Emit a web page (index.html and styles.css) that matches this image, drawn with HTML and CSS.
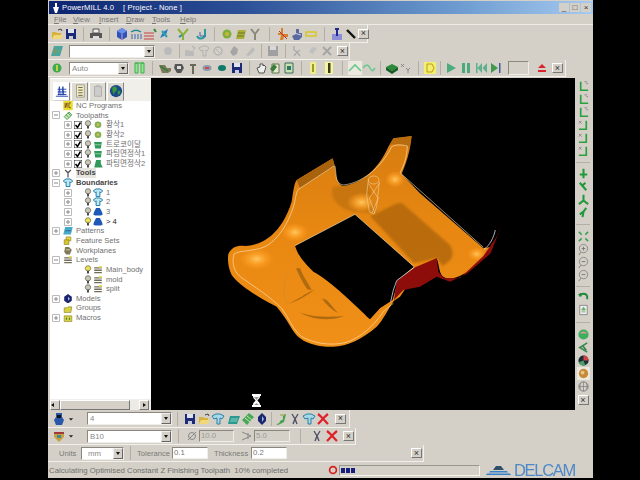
FILE: index.html
```html
<!DOCTYPE html>
<html lang="en">
<head>
<meta charset="utf-8">
<title>PowerMILL 4.0</title>
<link rel="stylesheet" href="styles.css">
</head>
<body>
<svg class="defs" aria-hidden="true">
  <symbol id="open" viewBox="0 0 14 14"><path d="M2 5h4l1 1h4v6H2z" fill="#d9b23c"/><path d="M4 8h9l-2 4H2z" fill="#f0d878"/><path d="M8 3l3-1 1 2" fill="none" stroke="#444"/></symbol>
  <symbol id="save" viewBox="0 0 14 14"><path d="M2 2h10v10H2z" fill="#1c2a78"/><path d="M4 2h6v4H4z" fill="#dfe3ee"/><path d="M5 9h4v3H5z" fill="#c8ccd8"/></symbol>
  <symbol id="print" viewBox="0 0 14 14"><path d="M4 2h6v4H4z" fill="#eee" stroke="#555"/><path d="M1 6h12v5H1z" fill="#555"/><path d="M4 9h6v3H4z" fill="#ddd"/></symbol>
  <symbol id="cube" viewBox="0 0 14 14"><path d="M7 1l5 3v6l-5 3-5-3V4z" fill="#2c52c0"/><path d="M7 7l5-3-5-3-5 3z" fill="#6b8fe8"/><path d="M7 7v6" stroke="#e8a0a0"/></symbol>
  <symbol id="arcs" viewBox="0 0 14 14"><path d="M2 5c3-2 7-2 10 0" fill="none" stroke="#2a8a9a" stroke-width="1.500"/><path d="M3 7v5M6 7v5M9 7v5M12 7v5" stroke="#3a66b0"/></symbol>
  <symbol id="redlines" viewBox="0 0 14 14"><path d="M1 6h10M1 9h10M1 12h10" stroke="#c84040"/><path d="M11 2l2 3" stroke="#2a8a3a" stroke-width="2"/></symbol>
  <symbol id="bluestar" viewBox="0 0 14 14"><path d="M3 11l3-6 5-3-2 6z" fill="#2a7ac8"/><path d="M5 4l5 6" stroke="#30a0a0" stroke-width="2"/></symbol>
  <symbol id="tealy" viewBox="0 0 14 14"><path d="M2 2l5 6 5-6M7 8v5" fill="none" stroke="#8ab23a" stroke-width="2"/><path d="M3 10l3-2" stroke="#2a8a9a" stroke-width="2"/></symbol>
  <symbol id="hook" viewBox="0 0 14 14"><path d="M2 9c2 4 7 3 8-1V2" fill="none" stroke="#2a9a9a" stroke-width="2"/><path d="M5 5v4h6" fill="none" stroke="#3a66b0"/></symbol>
  <symbol id="greenball" viewBox="0 0 14 14"><circle cx="7" cy="7" r="4.500" fill="#7fae3a"/><circle cx="7" cy="7" r="2" fill="#c8b840"/></symbol>
  <symbol id="olive" viewBox="0 0 14 14"><path d="M4 3h8l-2 9H2z" fill="#a8b03a"/><path d="M4 6h7M3 9h7" stroke="#6a7420"/></symbol>
  <symbol id="ytool" viewBox="0 0 14 14"><path d="M3 2l4 5 4-5M7 7v6" fill="none" stroke="#8a8a78" stroke-width="2"/></symbol>
  <symbol id="splat" viewBox="0 0 14 14"><path d="M5 1h2v6h5v3H8l-1 3H4l1-5H2V6h3z" fill="#d88030"/><path d="M3 4l8 8" stroke="#b03030"/></symbol>
  <symbol id="bsplat" viewBox="0 0 14 14"><path d="M6 2h3v4h3v4l-3 3H4L2 9l4-2z" fill="#5a6aa0"/><path d="M4 6l7 2" stroke="#d0d0e0"/></symbol>
  <symbol id="ybox" viewBox="0 0 14 14"><path d="M2 5h10v4H2z" fill="none" stroke="#d8c820" stroke-width="1.500"/></symbol>
  <symbol id="btool" viewBox="0 0 14 14"><path d="M2 7h10v6H2z" fill="#8c8fd8"/><path d="M5 1h4v2H8v6H6V3H5z" fill="#1c2a98"/></symbol>
  <symbol id="pen" viewBox="0 0 14 14"><path d="M3 3l8 8" stroke="#111" stroke-width="2.400"/></symbol>
  <symbol id="map" viewBox="0 0 14 14"><path d="M4 2h9l-3 10H1z" fill="#4aa4a0"/><path d="M3 7h8M6 3l-2 8" stroke="#8a9a50"/></symbol>
  <symbol id="gball" viewBox="0 0 14 14"><circle cx="7" cy="7" r="4" fill="#bbb"/></symbol>
  <symbol id="gfold" viewBox="0 0 14 14"><path d="M2 6h4l1 1h4v5H2z" fill="#bbb"/><path d="M9 2l3 2-2 2" fill="none" stroke="#aaa"/></symbol>
  <symbol id="gshirt" viewBox="0 0 14 14"><path d="M2 4l4-2h3l3 2-2 3-1-1v6H6V6L4 7z" fill="none" stroke="#b0b0b0"/></symbol>
  <symbol id="gdisc" viewBox="0 0 14 14"><circle cx="7" cy="7" r="4" fill="none" stroke="#b5b5b5" stroke-width="1.500"/><path d="M4 4l6 6" stroke="#b5b5b5"/></symbol>
  <symbol id="ghex" viewBox="0 0 14 14"><path d="M7 2l4 3-1 5-4 2-3-4z" fill="#a5a5a5"/></symbol>
  <symbol id="gsweep" viewBox="0 0 14 14"><path d="M3 11l7-8 2 3-6 6z" fill="#bbb"/></symbol>
  <symbol id="gsave" viewBox="0 0 14 14"><path d="M2 2h10v10H2z" fill="#a0a0a0"/><path d="M4 2h6v4H4z" fill="#d8d8d8"/></symbol>
  <symbol id="gx" viewBox="0 0 14 14"><path d="M4 2v4l3 2 3-2M4 12l3-4 3 4" fill="none" stroke="#ababab" stroke-width="1.400"/></symbol>
  <symbol id="gcheck" viewBox="0 0 14 14"><path d="M3 8l3-5 5 1-4 6z" fill="#c0c0c0"/></symbol>
  <symbol id="grx" viewBox="0 0 14 14"><path d="M3 3l8 8M11 3l-8 8" stroke="#a5a5a5" stroke-width="2"/></symbol>
  <symbol id="power" viewBox="0 0 14 14"><circle cx="7" cy="7" r="4.500" fill="#3caa50"/><path d="M7 4v6" stroke="#e0e040" stroke-width="1.600"/></symbol>
  <symbol id="gbars" viewBox="0 0 14 14"><path d="M3 2v10h3V2zM9 2v10h3V2zM3 2h9" fill="#8fe88f" stroke="#3cb04c"/></symbol>
  <symbol id="tray" viewBox="0 0 14 14"><path d="M1 4h6l2 3h4v3l-3 2H4z" fill="#7a7a5a"/><path d="M2 5l8 5" stroke="#2a7a3a" stroke-width="1.400"/></symbol>
  <symbol id="cup" viewBox="0 0 14 14"><path d="M3 3h7l2 4-3 5H5L2 7z" fill="#555"/><path d="M5 5h4v3H5z" fill="#ddd"/></symbol>
  <symbol id="tee" viewBox="0 0 14 14"><path d="M4 3h6v2H8v8H6V5H4z" fill="#6a6a5a"/></symbol>
  <symbol id="dish" viewBox="0 0 14 14"><ellipse cx="7" cy="7" rx="4.500" ry="3" fill="#8a9ab0"/><path d="M5 6h4v2H5z" fill="#d04a4a"/></symbol>
  <symbol id="teal" viewBox="0 0 14 14"><ellipse cx="7" cy="7" rx="4" ry="3" fill="#0f7a6a"/></symbol>
  <symbol id="hand" viewBox="0 0 14 14"><path d="M3 7l2 5h5l2-6-2-2-1 1V3L6 3v3z" fill="#eee" stroke="#555"/></symbol>
  <symbol id="docg" viewBox="0 0 14 14"><path d="M4 3h7v9H4z" fill="#e8e8d0" stroke="#5a7a4a"/><path d="M2 8l4-5 3 3-4 5z" fill="#3a7a3a"/></symbol>
  <symbol id="docb" viewBox="0 0 14 14"><path d="M3 2h8v10H3z" fill="#c8e0b0" stroke="#3a6a5a"/><path d="M5 5h4v4H5z" fill="#2a7a6a"/></symbol>
  <symbol id="ybar" viewBox="0 0 14 14"><path d="M4 1h6v12H4z" fill="#f0ee90"/><path d="M6 3h2v8H6z" fill="#9a9a30"/></symbol>
  <symbol id="ybar2" viewBox="0 0 14 14"><path d="M3 1h8v12H3z" fill="#f5f4a0"/><path d="M6 2h2.500v10H6z" fill="#3a3a18"/></symbol>
  <symbol id="wave" viewBox="0 0 14 14"><path d="M0 0h14v14H0z" fill="#ebe9e0"/><path d="M1 10l6-6 6 6" fill="none" stroke="#6cc88c" stroke-width="1.600"/></symbol>
  <symbol id="wave2" viewBox="0 0 14 14"><path d="M1 7c3-4 5-4 7 0s3 3 5 0" fill="none" stroke="#6cc88c" stroke-width="1.600"/></symbol>
  <symbol id="gcube" viewBox="0 0 14 14"><path d="M1 6l6-3 6 3-6 4z" fill="#2a8a3a"/><path d="M1 6v3l6 4 6-4V6l-6 4z" fill="#155a22"/></symbol>
  <symbol id="xyz" viewBox="0 0 14 14"><path d="M2 3l3 3M5 3L2 6M7 7l2 2 2-2M9 9v3" fill="none" stroke="#888"/></symbol>
  <symbol id="ygrid" viewBox="0 0 14 14"><path d="M1 1h12v12H1z" fill="#f2f06a"/><path d="M4 3h5l2 4-2 4H4M4 3v8" fill="none" stroke="#c09a20"/></symbol>
  <symbol id="play" viewBox="0 0 14 14"><path d="M3 2l9 5-9 5z" fill="#4cab7c"/></symbol>
  <symbol id="pause" viewBox="0 0 14 14"><path d="M3 2h3v10H3zM8 2h3v10H8z" fill="#4cab7c"/></symbol>
  <symbol id="rew" viewBox="0 0 14 14"><path d="M2 2h1.500v10H2zM8 2v10L3.500 7zM13 2v10L8.500 7z" fill="#5cb08c"/></symbol>
  <symbol id="next" viewBox="0 0 14 14"><path d="M3 2l7 5-7 5z" fill="#3f9a4c"/><path d="M11 2h1.500v10H11z" fill="#3b5f9a"/></symbol>
  <symbol id="eject" viewBox="0 0 14 14"><path d="M7 3l4 4H3z" fill="#d8242c"/><path d="M3 9h8v2H3z" fill="#d8242c"/></symbol>
  <symbol id="stool" viewBox="0 0 14 14"><path d="M4 1h6v4l2 3-2 5H4L2 8l2-3z" fill="#2a58a8"/><path d="M5 3h4v3H5z" fill="#111"/></symbol>
  <symbol id="down" viewBox="0 0 14 14"><path d="M4 6h6L7 9z" fill="#222"/></symbol>
  <symbol id="shirt" viewBox="0 0 14 14"><path d="M1 4l4-2h4l4 2-2 3-2-1v6H6V6L3 7z" fill="#a8d8e8" stroke="#2a80a8"/></symbol>
  <symbol id="teals" viewBox="0 0 14 14"><path d="M3 4h10l-3 8H1z" fill="#2a9a90"/><path d="M4 7h7M3 9h7" stroke="#8ad0c0"/></symbol>
  <symbol id="stack" viewBox="0 0 14 14"><path d="M1 8l7-7 5 4-7 8z" fill="#48a858"/><path d="M4 6l5 4M6 4l5 4" stroke="#c8e8b0"/></symbol>
  <symbol id="gem" viewBox="0 0 14 14"><path d="M7 1l4 4v4l-4 4-4-4V5z" fill="#1a2870"/><path d="M7 4l2 3-2 3z" fill="#a8b8e8"/></symbol>
  <symbol id="greens" viewBox="0 0 14 14"><path d="M2 12c5 0 3-4 6-4s-2-4 4-6l-2 8-6 3z" fill="#46a048"/><path d="M6 3h6" stroke="#90a040"/></symbol>
  <symbol id="scis" viewBox="0 0 14 14"><path d="M4 2l3 5 3-5M5 12l2-5 2 5" fill="none" stroke="#50506a" stroke-width="1.400"/></symbol>
  <symbol id="rx" viewBox="0 0 14 14"><path d="M2 2c3 2 7 7 10 10M12 2C9 4 5 9 2 12" stroke="#e02028" stroke-width="2.200" fill="none"/></symbol>
  <symbol id="pal" viewBox="0 0 14 14"><path d="M2 3h10v5l-5 5-5-5z" fill="#c8a040"/><path d="M2 3h10v2H2z" fill="#a03a3a"/><path d="M5 6h4v3H5z" fill="#3a8a9a"/></symbol>
  <symbol id="dia" viewBox="0 0 14 14"><circle cx="7" cy="7" r="3.500" fill="none" stroke="#888"/><path d="M3 11l8-8" stroke="#888"/></symbol>
  <symbol id="ang" viewBox="0 0 14 14"><path d="M2 3l9 4-9 4M8 4v6" fill="none" stroke="#888"/></symbol>
  <symbol id="stop" viewBox="0 0 14 14"><circle cx="7" cy="7" r="4" fill="none" stroke="#d82020" stroke-width="2"/></symbol>
  <symbol id="corner" viewBox="0 0 14 14"><path d="M4 2v9h8" fill="none" stroke="#2aa040" stroke-width="1.800"/><path d="M8 2h3M10 4h2" stroke="#888"/></symbol>
  <symbol id="corner2" viewBox="0 0 14 14"><path d="M10 2v9H2" fill="none" stroke="#2aa040" stroke-width="1.800"/><path d="M2 2l3 3M5 2L2 5" stroke="#888"/></symbol>
  <symbol id="cross" viewBox="0 0 14 14"><path d="M7 2v10M3 8h8" stroke="#1f9a3a" stroke-width="2.200"/></symbol>
  <symbol id="diag" viewBox="0 0 14 14"><path d="M3 3l7 8M9 3L6 6" stroke="#1f9a3a" stroke-width="2.200"/></symbol>
  <symbol id="tri" viewBox="0 0 14 14"><path d="M7 2v6L2 12M7 8l5 4" fill="none" stroke="#1f9a3a" stroke-width="2.200"/></symbol>
  <symbol id="zz" viewBox="0 0 14 14"><path d="M10 2L7 6l-1 6M3 9l4-3" fill="none" stroke="#1f9a3a" stroke-width="2.200"/></symbol>
  <symbol id="fit" viewBox="0 0 14 14"><path d="M2 2l3 3M12 2L9 5M2 12l3-3M12 12L9 9" stroke="#3aa050" stroke-width="1.600"/></symbol>
  <symbol id="zplus" viewBox="0 0 14 14"><circle cx="7" cy="6" r="4.500" fill="none" stroke="#888"/><path d="M7 4v4M5 6h4M4 10l-2 3" stroke="#777"/></symbol>
  <symbol id="zmin" viewBox="0 0 14 14"><circle cx="7" cy="6" r="4.500" fill="none" stroke="#888"/><path d="M5 6h4M4 10l-2 3" stroke="#777"/></symbol>
  <symbol id="undo" viewBox="0 0 14 14"><path d="M3 7c1-4 7-4 8 0v3" fill="none" stroke="#1f8a3a" stroke-width="2"/><path d="M1 5l3-2 1 4z" fill="#1f8a3a"/></symbol>
  <symbol id="page" viewBox="0 0 14 14"><path d="M3 2h8v10H3z" fill="#eee" stroke="#888"/><path d="M7 4l2 3H5zM5 9h4" fill="#6ab06a" stroke="#6ab06a"/></symbol>
  <symbol id="s-green" viewBox="0 0 14 14"><circle cx="7" cy="7" r="5.500" fill="#3cae5c"/><path d="M3 6c2-3 6-3 8 0z" fill="#d89a9a"/></symbol>
  <symbol id="s-net" viewBox="0 0 14 14"><path d="M11 2L3 7l8 5M6 5l4 5" fill="none" stroke="#3a8a50" stroke-width="1.800"/></symbol>
  <symbol id="s-mix" viewBox="0 0 14 14"><circle cx="7" cy="7" r="5.500" fill="#183038"/><path d="M7 7V1.500A5.500 5.500 0 0 1 12.500 7z" fill="#d84040"/><path d="M2 9a5.500 5.500 0 0 0 7 3.500L7 7z" fill="#4aa068"/></symbol>
  <symbol id="s-gold" viewBox="0 0 14 14"><path d="M0 0h14v14H0z" fill="#ebe8df"/><circle cx="7" cy="7" r="5" fill="#c8893a"/><circle cx="6" cy="6" r="2" fill="#e8c888"/></symbol>
  <symbol id="globe" viewBox="0 0 14 14"><circle cx="7" cy="7" r="5" fill="none" stroke="#777"/><path d="M2 7h10M7 2v10M4 3.500c-1 2-1 5 0 7M10 3.500c1 2 1 5 0 7" fill="none" stroke="#777" stroke-width=".7"/></symbol>
  <symbol id="tab1" viewBox="0 0 16 16"><path d="M1 14h14M3 12h10M3 9h10M3 6h10" stroke="#1c3fa8"/><path d="M4 13l1-10 1 10M8 13l1-10 1 10" fill="none" stroke="#1c3fa8"/></symbol>
  <symbol id="tab2" viewBox="0 0 16 16"><path d="M4 1h9v14H4z" fill="#f5eeb8" stroke="#999"/><path d="M6 4h5M6 7h5M6 10h5M6 13h5" stroke="#555"/></symbol>
  <symbol id="tab3" viewBox="0 0 16 16"><path d="M4 3h8v11H4z" fill="#ccc" stroke="#aaa"/><path d="M6 1h4v2H6z" fill="#bbb"/></symbol>
  <symbol id="tab4" viewBox="0 0 16 16"><circle cx="8" cy="8" r="7" fill="#1a4a8a"/><path d="M4 4c3-2 5-1 5 2S6 8 6 11 3 8 4 4zM10 8c2-1 3 0 3 1s-2 4-3 3z" fill="#3a9a3a"/></symbol>
  <symbol id="t-nc" viewBox="0 0 10 10"><path d="M0 0h10v10H0z" fill="#e8dc30"/><path d="M2 2v5l2-5v5M6 2h2M6 2v5h2" fill="none" stroke="#805020"/></symbol>
  <symbol id="t-tp" viewBox="0 0 10 10"><path d="M1 6l5-5 3 3-5 5z" fill="#d0e8b0" stroke="#4a9a5a"/><path d="M3 4l3 3M5 2l3 3" stroke="#4a9a5a"/></symbol>
  <symbol id="t-gb" viewBox="0 0 10 10"><circle cx="5" cy="5" r="3.500" fill="#80b050"/><circle cx="5" cy="5" r="1.500" fill="#c8c060"/></symbol>
  <symbol id="t-gs" viewBox="0 0 10 10"><path d="M1 2h8l-1 7H2z" fill="#2f9a5a"/><path d="M2 5h6" stroke="#9ad0a0"/></symbol>
  <symbol id="t-gm" viewBox="0 0 10 10"><path d="M3 1h5v4l2 4H1z" fill="#2f9a5a"/></symbol>
  <symbol id="t-tool" viewBox="0 0 10 10"><path d="M2 1l3 3 3-3M5 4v5" fill="none" stroke="#555" stroke-width="1.300"/></symbol>
  <symbol id="t-b" viewBox="0 0 10 10"><path d="M0 3l3-2h4l3 2-2 2-1-1v5H3V4L2 5z" fill="#c0e8f0" stroke="#1a78a8"/></symbol>
  <symbol id="t-bf" viewBox="0 0 10 10"><path d="M3 1h4l2 4 1 3-2 1H2L0 8l1-3z" fill="#1e58b8"/></symbol>
  <symbol id="t-pat" viewBox="0 0 10 10"><path d="M2 1h8L8 9H0z" fill="#4aa8c8"/><path d="M2 5h6" stroke="#2a6a88"/></symbol>
  <symbol id="t-fs" viewBox="0 0 10 10"><path d="M3 1h5v4H3z" fill="#e8d830" stroke="#807020" stroke-width=".6"/><path d="M1 4h5v5H1z" fill="#d8c828" stroke="#807020" stroke-width=".6"/></symbol>
  <symbol id="t-wp" viewBox="0 0 10 10"><path d="M2 1h4l3 3-2 5H3L1 6z" fill="#807a5a"/><path d="M3 4h4" stroke="#d8d0a0"/></symbol>
  <symbol id="t-lv" viewBox="0 0 10 10"><path d="M1 3h8M1 5.500h8M1 8h8" stroke="#706c58" stroke-width="1.400"/><path d="M6 1h3v2H6z" fill="#e8e050"/></symbol>
  <symbol id="t-mod" viewBox="0 0 10 10"><path d="M5 0l4 3v4l-4 3-4-3V3z" fill="#1a2470"/><path d="M5 3l2 2-2 2z" fill="#b0b8e0"/></symbol>
  <symbol id="t-grp" viewBox="0 0 10 10"><path d="M1 4h3l1-1h4l-1 6H1z" fill="#d8d040" stroke="#807a20" stroke-width=".6"/></symbol>
  <symbol id="t-mac" viewBox="0 0 10 10"><path d="M1 3h8v6H1z" fill="#d8d040" stroke="#807a20" stroke-width=".6"/><path d="M3 5h1v2H3zM6 5h1v2H6z" fill="#2a7a3a"/></symbol>
  <symbol id="bulb" viewBox="0 0 8 10"><circle cx="4" cy="3.500" r="2.800" fill="#c8c8b0" stroke="#666" stroke-width=".8"/><path d="M3 6h2v3H3z" fill="#444"/></symbol>
  <symbol id="bulby" viewBox="0 0 8 10"><circle cx="4" cy="3.500" r="2.800" fill="#e8e060" stroke="#807a30" stroke-width=".8"/><path d="M3 6h2v3H3z" fill="#444"/></symbol>
  <symbol id="chk" viewBox="0 0 8 8"><path d="M0 0h8v8H0z" fill="#fff" stroke="#222"/><path d="M1.500 4l2 2.500 3-5" fill="none" stroke="#000" stroke-width="1.500"/></symbol>
  <symbol id="plus" viewBox="0 0 8 8"><path d="M.5.500h7v7h-7z" fill="#fff" stroke="#bbb"/><path d="M2 4h4M4 2v4" stroke="#888"/></symbol>
  <symbol id="minus" viewBox="0 0 8 8"><path d="M.5.500h7v7h-7z" fill="#fff" stroke="#bbb"/><path d="M2 4h4" stroke="#888"/></symbol>
</svg>

<div class="app">
  <header class="title">
    <svg class="ti" viewBox="0 0 8 10"><path d="M3 0h2v4h2L5 10H3L1 4h2z" fill="#fff"/></svg>
    <span class="ttext">PowerMILL 4.0</span><span class="ttext tproj">[ Project - None ]</span>
    <div class="wbtns"><span class="wb">_</span><span class="wb">□</span><span class="wb">×</span></div>
  </header>
  <nav class="menu"><span class="m1"><u>F</u>ile</span><span class="m2"><u>V</u>iew</span><span class="m3"><u>I</u>nsert</span><span class="m4"><u>D</u>raw</span><span class="m5"><u>T</u>ools</span><span class="m6"><u>H</u>elp</span></nav>

  <div class="tb tb-a"><div class="bar w-319">
    <svg class="ic"><use href="#open"/></svg><svg class="ic"><use href="#save"/></svg><i class="d g11"></i><svg class="ic"><use href="#print"/></svg><i class="d g12"></i>
    <svg class="ic"><use href="#cube"/></svg><svg class="ic"><use href="#arcs"/></svg><svg class="ic"><use href="#redlines"/></svg><svg class="ic"><use href="#bluestar"/></svg><i class="g g5"></i><svg class="ic"><use href="#tealy"/></svg><i class="g g5"></i><svg class="ic"><use href="#hook"/></svg><i class="d g11"></i>
    <svg class="ic"><use href="#greenball"/></svg><svg class="ic"><use href="#olive"/></svg><svg class="ic"><use href="#ytool"/></svg><i class="d g14"></i>
    <svg class="ic"><use href="#splat"/></svg><svg class="ic"><use href="#bsplat"/></svg><svg class="ic"><use href="#ybox"/></svg><i class="d g12"></i>
    <svg class="ic"><use href="#btool"/></svg><svg class="ic"><use href="#pen"/></svg><button class="x">×</button>
  </div></div>

  <div class="tb"><div class="bar w-302">
    <svg class="ic"><use href="#map"/></svg><i class="g g5"></i><div class="combo w-86"><span></span><b></b></div><i class="g g6"></i><svg class="ic"><use href="#gball"/></svg><i class="d g8"></i>
    <svg class="ic"><use href="#gfold"/></svg><svg class="ic"><use href="#gshirt"/></svg><svg class="ic"><use href="#gdisc"/></svg><i class="g g2"></i><svg class="ic"><use href="#ghex"/></svg><i class="g g2"></i><svg class="ic"><use href="#gsweep"/></svg><i class="d g9"></i>
    <svg class="ic"><use href="#gsave"/></svg><i class="d g10"></i><svg class="ic"><use href="#gx"/></svg><i class="g g2"></i><svg class="ic"><use href="#gcheck"/></svg><svg class="ic"><use href="#grx"/></svg><i class="g g3"></i><button class="x">×</button>
  </div></div>

  <div class="tb"><div class="bar w-518">
    <svg class="ic"><use href="#power"/></svg><i class="g g5"></i><div class="combo w-60"><span class="muted">Auto</span><b></b></div><i class="g g3"></i><svg class="ic"><use href="#gbars"/></svg><i class="d g12"></i>
    <svg class="ic"><use href="#tray"/></svg><svg class="ic"><use href="#cup"/></svg><svg class="ic"><use href="#tee"/></svg><svg class="ic"><use href="#dish"/></svg><i class="g g1"></i><svg class="ic"><use href="#teal"/></svg><i class="g g1"></i><svg class="ic"><use href="#save"/></svg><i class="d g10"></i>
    <svg class="ic"><use href="#hand"/></svg><svg class="ic"><use href="#docg"/></svg><svg class="ic"><use href="#docb"/></svg><i class="d g10"></i>
    <svg class="ic"><use href="#ybar"/></svg><i class="g g2"></i><svg class="ic"><use href="#ybar2"/></svg><i class="d g12"></i>
    <svg class="ic"><use href="#wave"/></svg><svg class="ic"><use href="#wave2"/></svg><i class="d g9"></i>
    <svg class="ic"><use href="#gcube"/></svg><svg class="ic"><use href="#xyz"/></svg><i class="d g10"></i>
    <svg class="ic"><use href="#ygrid"/></svg><i class="d g7"></i>
    <svg class="ic"><use href="#play"/></svg><i class="g g1"></i><svg class="ic"><use href="#pause"/></svg><i class="g g1"></i><svg class="ic"><use href="#rew"/></svg><svg class="ic"><use href="#next"/></svg><i class="g g6"></i><div class="field w-21"></div><i class="g g6"></i><svg class="ic"><use href="#eject"/></svg><i class="g g3"></i><button class="x">×</button>
  </div></div>

  <main class="main">
    <aside class="tree">
      <div class="tabs">
        <span class="tab tab-on"><svg class="ti16"><use href="#tab1"/></svg></span>
        <span class="tab"><svg class="ti16"><use href="#tab2"/></svg></span>
        <span class="tab"><svg class="ti16"><use href="#tab3"/></svg></span>
        <span class="tab"><svg class="ti16"><use href="#tab4"/></svg></span>
      </div>
      <div class="rows">
        <div class="row top"><i class="e"></i><svg class="n"><use href="#t-nc"/></svg><span>NC Programs</span></div>
        <div class="row top"><svg class="e"><use href="#minus"/></svg><svg class="n"><use href="#t-tp"/></svg><span>Toolpaths</span></div>
        <div class="row sub"><svg class="e"><use href="#plus"/></svg><svg class="c"><use href="#chk"/></svg><svg class="b"><use href="#bulb"/></svg><svg class="n2"><use href="#t-gb"/></svg><span>황삭1</span></div>
        <div class="row sub"><svg class="e"><use href="#plus"/></svg><svg class="c"><use href="#chk"/></svg><svg class="b"><use href="#bulb"/></svg><svg class="n2"><use href="#t-gb"/></svg><span>황삭2</span></div>
        <div class="row sub"><svg class="e"><use href="#plus"/></svg><svg class="c"><use href="#chk"/></svg><svg class="b"><use href="#bulb"/></svg><svg class="n2"><use href="#t-gs"/></svg><span>트로코이달</span></div>
        <div class="row sub"><svg class="e"><use href="#plus"/></svg><svg class="c"><use href="#chk"/></svg><svg class="b"><use href="#bulb"/></svg><svg class="n2"><use href="#t-gs"/></svg><span>파팅면정삭1</span></div>
        <div class="row sub"><svg class="e"><use href="#plus"/></svg><svg class="c"><use href="#chk"/></svg><svg class="b"><use href="#bulb"/></svg><svg class="n2"><use href="#t-gm"/></svg><span>파팅면정삭2</span></div>
        <div class="row top strong"><svg class="e"><use href="#plus"/></svg><svg class="n"><use href="#t-tool"/></svg><span class="sel">Tools</span></div>
        <div class="row top strong"><svg class="e"><use href="#minus"/></svg><svg class="n"><use href="#t-b"/></svg><span>Boundaries</span></div>
        <div class="row sub"><svg class="e"><use href="#plus"/></svg><i class="c"></i><svg class="b"><use href="#bulb"/></svg><svg class="n2"><use href="#t-b"/></svg><span>1</span></div>
        <div class="row sub"><svg class="e"><use href="#plus"/></svg><i class="c"></i><svg class="b"><use href="#bulb"/></svg><svg class="n2"><use href="#t-b"/></svg><span>2</span></div>
        <div class="row sub"><svg class="e"><use href="#plus"/></svg><i class="c"></i><svg class="b"><use href="#bulb"/></svg><svg class="n2"><use href="#t-bf"/></svg><span>3</span></div>
        <div class="row sub"><svg class="e"><use href="#plus"/></svg><i class="c"></i><svg class="b"><use href="#bulby"/></svg><svg class="n2"><use href="#t-bf"/></svg><span class="act">&gt; 4</span></div>
        <div class="row top"><svg class="e"><use href="#plus"/></svg><svg class="n"><use href="#t-pat"/></svg><span>Patterns</span></div>
        <div class="row top"><i class="e"></i><svg class="n"><use href="#t-fs"/></svg><span>Feature Sets</span></div>
        <div class="row top"><i class="e"></i><svg class="n"><use href="#t-wp"/></svg><span>Workplanes</span></div>
        <div class="row top"><svg class="e"><use href="#minus"/></svg><svg class="n"><use href="#t-lv"/></svg><span>Levels</span></div>
        <div class="row sub"><i class="e"></i><i class="c"></i><svg class="b"><use href="#bulby"/></svg><svg class="n2"><use href="#t-lv"/></svg><span>Main_body</span></div>
        <div class="row sub"><i class="e"></i><i class="c"></i><svg class="b"><use href="#bulb"/></svg><svg class="n2"><use href="#t-lv"/></svg><span>mold</span></div>
        <div class="row sub"><i class="e"></i><i class="c"></i><svg class="b"><use href="#bulb"/></svg><svg class="n2"><use href="#t-lv"/></svg><span>split</span></div>
        <div class="row top"><svg class="e"><use href="#plus"/></svg><svg class="n"><use href="#t-mod"/></svg><span>Models</span></div>
        <div class="row top"><i class="e"></i><svg class="n"><use href="#t-grp"/></svg><span>Groups</span></div>
        <div class="row top"><svg class="e"><use href="#plus"/></svg><svg class="n"><use href="#t-mac"/></svg><span>Macros</span></div>
      </div>
      <div class="hscroll"><span class="sb sb-l"></span><span class="thumb"></span><span class="sb sb-r"></span></div>
    </aside>

    <section class="view">
      <svg class="model" viewBox="0 0 870 660">
        <defs>
          <linearGradient id="body" x1="0" y1="0" x2="0" y2="1"><stop offset="0" stop-color="#d67c10"/><stop offset=".45" stop-color="#e88812"/><stop offset="1" stop-color="#f09018"/></linearGradient>
          <radialGradient id="hl"><stop offset="0" stop-color="#ffc860"/><stop offset=".5" stop-color="#ffa52c" stop-opacity=".7"/><stop offset="1" stop-color="#ff9a20" stop-opacity="0"/></radialGradient>
          <clipPath id="bodyclip"><path clip-rule="evenodd" d="M25 372C35 350 55 345 75 348C130 345 185 310 215 215C220 185 222 160 230 150L338 85L345 110C348 140 350 160 368 168C410 165 470 130 505 50L520 25L575 18C572 50 565 85 545 132L600 190L790 355L815 350C800 375 770 410 735 430C710 445 685 450 672 442C655 430 660 410 650 385L600 410L540 500L522 512C505 535 490 570 470 590C430 625 380 650 340 650C300 652 260 640 240 625C215 605 205 570 170 530C130 510 60 470 35 435C25 415 22 390 25 372ZM225 347L405 253L582 410L535 450L518 510L480 535L450 568C410 530 330 450 280 425C255 400 235 380 225 347Z"/></clipPath>
        </defs>
        <path fill="url(#body)" fill-rule="evenodd" d="M25 372C35 350 55 345 75 348C130 345 185 310 215 215C220 185 222 160 230 150L338 85L345 110C348 140 350 160 368 168C410 165 470 130 505 50L520 25L575 18C572 50 565 85 545 132L600 190L790 355L815 350C800 375 770 410 735 430C710 445 685 450 672 442C655 430 660 410 650 385L600 410L540 500L522 512C505 535 490 570 470 590C430 625 380 650 340 650C300 652 260 640 240 625C215 605 205 570 170 530C130 510 60 470 35 435C25 415 22 390 25 372ZM225 347L405 253L582 410L535 450L518 510L480 535L450 568C410 530 330 450 280 425C255 400 235 380 225 347Z"/>
        <g clip-path="url(#bodyclip)">
          <path fill="#a9620c" d="M230 150L338 85L345 108L240 175Z"/>
          <path fill="#b86c0e" d="M510 45L520 25L575 18L568 55C550 40 530 40 510 45Z"/>
          <path class="soft" fill="#bd700e" opacity=".7" d="M340 170C360 170 400 160 440 130L470 250L400 245C370 240 340 220 335 190Z"/>
          <path class="soft" fill="#b56a0e" opacity=".9" d="M450 258C490 245 510 222 545 218L690 345C702 365 700 385 685 395L668 408L650 385L582 400Z"/>
          <ellipse cx="110" cy="387" rx="52" ry="32" fill="url(#hl)"/>
          <ellipse cx="225" cy="307" rx="40" ry="28" fill="url(#hl)"/>
          <ellipse cx="425" cy="217" rx="45" ry="30" fill="url(#hl)"/>
          <ellipse cx="525" cy="148" rx="30" ry="25" fill="url(#hl)"/>
          <ellipse cx="770" cy="372" rx="28" ry="20" fill="url(#hl)"/>
          <path class="soft1" fill="#b06a10" d="M205 522C230 515 265 495 285 478C265 488 235 505 205 522ZM228 415L240 415C250 440 265 460 275 480L262 478C250 460 238 440 228 415ZM232 545C280 570 330 575 372 558C340 560 280 565 232 545ZM305 505L320 510C335 525 345 540 355 550C335 540 320 525 305 505Z"/>
        </g>
        <path fill="none" stroke="#c98a30" stroke-width="2" d="M200 440C185 470 190 510 205 522"/>
        <path fill="#8c0d0a" d="M530 452L585 412L650 385L655 425L672 445L720 445L790 378L830 320L845 285L812 370L740 432L690 455L650 440L600 470L550 480L522 510Z"/>
        <path fill="none" stroke="#ffe8c0" stroke-width="1.800" d="M42 372C60 360 100 365 135 350C175 330 205 280 222 225C228 195 230 185 235 178L342 108M345 108C350 140 345 160 370 165C420 160 480 120 515 50C530 42 550 45 562 48C560 80 555 100 540 128L790 352M225 347L405 253L582 410M42 372C35 400 40 430 75 450C110 475 150 500 185 535C205 560 215 595 245 620C280 640 330 648 375 638C420 625 460 590 490 545L520 520"/>
        <path fill="none" stroke="#dfeefc" stroke-width="2.200" d="M582 412L530 452L520 480L512 515M792 358C810 345 820 325 826 300"/>
        <g fill="none" stroke="#f4dcb0" stroke-width="1.600"><ellipse cx="461" cy="150" rx="16" ry="12"/><path d="M445 150L440 195L448 245L462 252L470 230L478 155M445 160L475 205L455 250M478 160L448 205L465 250"/></g>
      </svg>
      <svg class="hourglass" viewBox="0 0 9 13"><path d="M0 0h9v2H8c0 3-2 3-2.500 4.500C6 8 8 8 8 11h1v2H0v-2h1c0-3 2-3 2.500-4.500C3 5 1 5 1 2H0z" fill="#fff"/><path d="M2 3h5L4.500 6zM2 11l2.500-2L7 11z" fill="#999"/></svg>
    </section>

    <aside class="rail">
      <svg class="ri"><use href="#corner"/></svg><svg class="ri"><use href="#corner"/></svg><svg class="ri"><use href="#corner"/></svg><svg class="ri"><use href="#corner2"/></svg><svg class="ri"><use href="#corner2"/></svg><svg class="ri"><use href="#corner2"/></svg>
      <i class="vd v9"></i>
      <svg class="ri"><use href="#cross"/></svg><svg class="ri"><use href="#diag"/></svg><svg class="ri"><use href="#tri"/></svg><svg class="ri"><use href="#zz"/></svg>
      <i class="vd v11"></i>
      <svg class="ri"><use href="#fit"/></svg><svg class="ri"><use href="#zplus"/></svg><svg class="ri"><use href="#zmin"/></svg><svg class="ri"><use href="#zmin"/></svg>
      <i class="vd v8"></i>
      <svg class="ri"><use href="#undo"/></svg><svg class="ri ri14"><use href="#page"/></svg>
      <i class="vd v11"></i>
      <svg class="ri"><use href="#s-green"/></svg><svg class="ri"><use href="#s-net"/></svg><svg class="ri"><use href="#s-mix"/></svg><svg class="ri"><use href="#s-gold"/></svg><svg class="ri"><use href="#globe"/></svg>
      <button class="x xr">×</button>
    </aside>
  </main>

  <div class="tb tb-a"><div class="bar w-302">
    <i class="g g2"></i><svg class="ic"><use href="#stool"/></svg><svg class="car"><use href="#down"/></svg><i class="g g11"></i><div class="combo w-85"><span class="muted">4</span><b></b></div><i class="d g11"></i>
    <svg class="ic"><use href="#save"/></svg><svg class="ic"><use href="#open"/></svg><svg class="ic"><use href="#shirt"/></svg><i class="g g2"></i><svg class="ic"><use href="#teals"/></svg><svg class="ic"><use href="#stack"/></svg><svg class="ic"><use href="#gem"/></svg><i class="d g5"></i>
    <svg class="ic"><use href="#greens"/></svg><svg class="ic"><use href="#scis"/></svg><svg class="ic"><use href="#shirt"/></svg><svg class="ic"><use href="#rx"/></svg><i class="g g5"></i><button class="x">×</button>
  </div></div>
  <div class="tb"><div class="bar w-308">
    <i class="g g2"></i><svg class="ic"><use href="#pal"/></svg><svg class="car"><use href="#down"/></svg><i class="g g11"></i><div class="combo w-85"><span class="muted">B10</span><b></b></div><i class="d g13"></i>
    <svg class="ic"><use href="#dia"/></svg><div class="field dis w-35">10.0</div><i class="g g6"></i><svg class="ic"><use href="#ang"/></svg><div class="field dis w-36">5.0</div><i class="d g20"></i>
    <svg class="ic"><use href="#scis"/></svg><i class="g g1"></i><svg class="ic"><use href="#rx"/></svg><i class="g g4"></i><button class="x">×</button>
  </div></div>
  <div class="tb"><div class="bar w-376">
    <i class="g g9"></i><span class="lbl w-l22">Units</span><div class="combo w-43 c-ind"><span class="muted">mm</span><b></b></div><i class="d g13"></i>
    <span class="lbl w-l35">Tolerance</span><div class="field w-36">0.1</div><i class="g g6"></i><span class="lbl w-l37">Thickness</span><div class="field w-36">0.2</div>
    <button class="x push">×</button>
  </div></div>

  <footer class="status">
    <span class="msg">Calculating Optimised Constant Z Finishing Toolpath&nbsp; 10% completed</span>
    <svg class="stop"><use href="#stop"/></svg>
    <div class="prog"><i></i><i></i><i></i></div>
    <svg class="logo" viewBox="0 0 27 14"><path d="M8 7l3-4h5l3 4z" fill="#30506a"/><path d="M5 8h17l1 1.500H4zM2 10.500h23l1 1.500H1z" fill="#3a80c8"/></svg>
    <span class="brand">DELCAM</span>
  </footer>
</div>
</body>
</html>
```

FILE: styles.css
```css
* { box-sizing: border-box; }
html, body { margin: 0; height: 100%; background: #000; overflow: hidden; }
body { padding-left: 48px; font-family: "Liberation Sans", Arial, sans-serif; }
.defs { display: none; }

.app { width: 545px; height: 478px; background: #d4d0c8; display: flex; flex-direction: column; filter: blur(.45px); color: #6c6c68; font-size: 7.6px; }

.title { height: 13px; flex: none; margin: 1px 0 0 1px; background: linear-gradient(90deg, #0d2470 0%, #2b4f96 35%, #6d9bd0 75%, #a6caf0 100%); display: flex; align-items: center; color: #fff; }
.ti { width: 8px; height: 10px; margin-left: 3px; }
.ttext { font-size: 7.6px; margin-left: 2px; letter-spacing: .1px; }
.tproj { margin-left: 9px; }
.wbtns { margin-left: auto; margin-right: 2px; display: flex; gap: 1px; }
.wb { width: 10px; height: 9px; background: #d4d0c8; color: #333; font-size: 8px; line-height: 9px; text-align: center; }

.menu { height: 11px; flex: none; display: flex; align-items: center; font-size: 7.8px; border-bottom: 1px solid #eeece6; }
.menu span { color: #777; }
.m1 { margin-left: 6px; width: 19px; }
.m2 { width: 26px; }
.m3 { width: 27px; }
.m4 { width: 26px; }
.m5 { width: 28px; }
.m6 { width: 22px; }

.tb { height: 17px; display: flex; flex: none; }
.tb-a { height: 18px; }
.bar { height: 100%; display: flex; align-items: center; padding-left: 2px; border-right: 1px solid #f2f0ea; border-bottom: 1px solid #f2f0ea; }
.w-319 { width: 320px; }
.w-302 { width: 302px; }
.w-308 { width: 308px; }
.w-518 { width: 518px; }
.w-376 { width: 376px; }

.ic { width: 14px; height: 14px; flex: none; }
.car { width: 10px; height: 14px; flex: none; }
.g, .d { display: block; height: 14px; flex: none; }
.d { background: linear-gradient(#b3afa6, #b3afa6) center / 1px 100% no-repeat; }
.g1 { width: 1px; }
.g2 { width: 2px; }
.g3 { width: 3px; }
.g4 { width: 4px; }
.g5 { width: 5px; }
.g6 { width: 6px; }
.g7 { width: 7px; }
.g8 { width: 8px; }
.g9 { width: 9px; }
.g10 { width: 10px; }
.g11 { width: 11px; }
.g12 { width: 12px; }
.g13 { width: 13px; }
.g14 { width: 14px; }
.g20 { width: 20px; }

.x { width: 11px; height: 10px; padding: 0; flex: none; background: #d4d0c8; border: 1px solid; border-color: #fff #777 #777 #fff; color: #333; font: 9px/7px "Liberation Sans", sans-serif; }
.push { margin-left: auto; margin-right: 1px; }

.combo { height: 13px; background: #fff; border: 1px solid; border-color: #8a877f #f0eee8 #f0eee8 #8a877f; display: flex; align-items: center; flex: none; }
.combo span { flex: 1; padding-left: 2px; font-size: 7.8px; line-height: 11px; }
.combo b { width: 10px; height: 11px; background: #d4d0c8; border: 1px solid; border-color: #eee #666 #666 #eee; position: relative; }
.combo b::after { content: ""; position: absolute; left: 2px; top: 3px; border: 2.5px solid transparent; border-top: 3px solid #111; border-bottom: 0; }
.muted { color: #888; }
.c-ind span { padding-left: 6px; }
.w-86 { width: 86px; }
.w-85 { width: 85px; }
.w-60 { width: 60px; }
.w-43 { width: 43px; }

.field { height: 12px; background: #fff; border: 1px solid; border-color: #8a877f #f0eee8 #f0eee8 #8a877f; font-size: 7.8px; line-height: 10px; padding-left: 1px; color: #777; flex: none; }
.dis { background: #d4d0c8; color: #9a9a94; }
.w-21 { width: 21px; background: #d4d0c8; height: 14px; }
.w-35 { width: 35px; }
.w-36 { width: 36px; }
.lbl { flex: none; font-size: 7.6px; color: #7a7a76; white-space: nowrap; }
.w-l22 { width: 22px; }
.w-l35 { width: 35px; }
.w-l37 { width: 37px; }

.main { flex: 1; min-height: 0; display: flex; margin-top: 1px; }
.tree { width: 103px; padding-left: 2px; display: flex; flex-direction: column; background: #d4d0c8; flex: none; }
.tabs { height: 23px; background: #f1efe9; display: flex; align-items: center; padding: 2px 0 0 3px; gap: 1px; flex: none; border-top: 1px solid #fff; }
.tab { width: 17px; height: 19px; border: 1px solid; border-color: #fff #888 #d4d0c8 #fff; display: flex; align-items: center; justify-content: center; background: #dedbd3; }
.tab-on { background: #fff; }
.ti16 { width: 14px; height: 16px; }
.rows { flex: 1; min-height: 0; background: #fff; overflow: hidden; }
.row { height: 9.65px; display: flex; align-items: center; font-size: 7.6px; line-height: 9.65px; white-space: nowrap; }
.row span { color: #707070; font-family: "Liberation Sans", "Noto Sans CJK KR", sans-serif; }
.top { padding-left: 2px; }
.sub { padding-left: 14px; }
.e { display: block; width: 8px; height: 8px; flex: none; }
.n { width: 10px; height: 9.5px; margin-left: 3px; flex: none; }
.n + span { margin-left: 3px; }
.c { display: block; width: 8px; height: 8px; margin-left: 2px; flex: none; }
.b { width: 8px; height: 9.5px; margin-left: 2px; flex: none; }
.n2 { width: 10px; height: 9.5px; margin-left: 1px; flex: none; }
.n2 + span { margin-left: 3px; }
.strong span { font-weight: 700; color: #444; }
.sel { background: #e6e4de; }
.act { color: #222 !important; }

.hscroll { height: 11px; display: flex; background: #ecebe6; border-top: 1px solid #eee; flex: none; }
.sb { width: 10px; height: 100%; background: #d4d0c8; border: 1px solid; border-color: #fff #777 #777 #fff; position: relative; flex: none; }
.sb-l::after, .sb-r::after { content: ""; position: absolute; top: 2px; border: 2.5px solid transparent; }
.sb-l::after { left: 0; border-right: 3px solid #111; border-left: 0; }
.sb-r::after { left: 3px; border-left: 3px solid #111; border-right: 0; }
.thumb { width: 70px; margin-right: 9px; background: #d4d0c8; border: 1px solid; border-color: #fff #777 #777 #fff; }

.view { flex: 1; min-width: 0; background: #000; position: relative; overflow: hidden; }
.model { position: absolute; left: 69px; top: 52px; width: 290px; height: 220px; }
.soft { filter: blur(3px); }
.soft1 { filter: blur(1px); }
.hourglass { position: absolute; left: 101px; top: 316px; width: 9px; height: 13px; }

.rail { width: 18px; padding: 2px 3px 0 1px; display: flex; flex-direction: column; align-items: center; flex: none; }
.ri { width: 13px; height: 13px; flex: none; }
.ri14 { height: 14px; }
.vd { display: block; width: 100%; flex: none; background: linear-gradient(#b3afa6, #b3afa6) center / 100% 1px no-repeat; }
.v8 { height: 8px; }
.v9 { height: 9px; }
.v11 { height: 11px; }
.xr { margin-top: 2px; }

.status { height: 16px; flex: none; display: flex; align-items: center; padding-left: 1px; }
.msg { flex: 1; min-width: 0; color: #6f6f6b; font-size: 7.8px; white-space: nowrap; }
.stop { width: 12px; height: 12px; flex: none; }
.prog { width: 141px; height: 11px; border: 1px solid; border-color: #9a978f #f5f4ef #f5f4ef #9a978f; display: flex; gap: 1px; padding: 2px 0 2px 1px; flex: none; }
.prog i { width: 4px; background: #16207a; }
.logo { width: 27px; height: 14px; margin-left: 5px; flex: none; }
.brand { width: 79px; margin-left: 2px; flex: none; color: #4d88c8; font-size: 16.5px; letter-spacing: -1.3px; line-height: 15px; }
```
